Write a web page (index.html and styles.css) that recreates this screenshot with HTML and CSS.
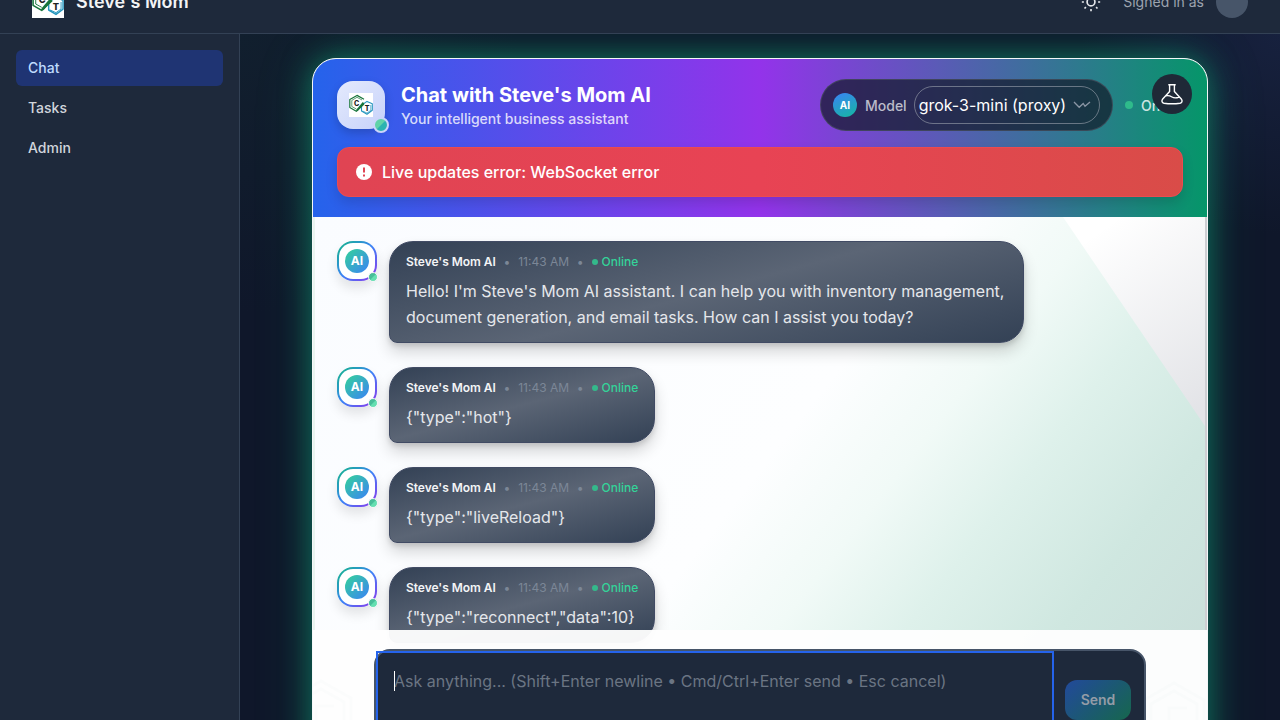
FILE: index.html
```html
<!DOCTYPE html>
<html lang="en">
<head>
<meta charset="utf-8">
<title>Steve's Mom</title>
<link rel="stylesheet" href="styles.css">
</head>
<body>
<svg width="0" height="0" class="defs">
  <symbol id="logo" viewBox="0 0 24 24">
    <rect width="24" height="24" fill="#fff"/>
    <g fill="none" stroke-linejoin="round">
      <path d="M23.3 10.8V17.3L18 21.300 12.5 18V12.200L18 8.4Z" stroke="#2596be" stroke-width="1.1"/>
      <path d="M13.600 18 18 20 21.800 17.200V12" stroke="#2596be" stroke-width=".7"/>
      <path d="M15 6.2 8 2.4.8 6.5V14.5L7.3 18.300 15 11" stroke="#18753c" stroke-width="1.2"/>
      <path d="M13 7 8 4.3 2.8 7.4V13.5L7.3 16" stroke="#18753c" stroke-width=".7"/>
      <path d="M7.800 17.6 14.500 9.7" stroke="#18753c" stroke-width="2"/>
    </g>
    <text x="7.7" y="13" text-anchor="middle" class="logo-letter">C</text>
    <text x="18" y="18" text-anchor="middle" class="logo-letter">T</text>
  </symbol>
  <symbol id="hex" viewBox="0 0 70 80">
    <path d="M35 3 65 20V60L35 77 5 60V20ZM35 11 58 24V56L35 69 12 56V24ZM48 28H30V52H48" fill="none" stroke="currentColor" stroke-width="3"/>
  </symbol>
</svg>
<header class="topbar">
  <div class="brand"><svg class="brand-logo"><use href="#logo"/></svg><span>Steve's Mom</span></div>
  <div class="account">
    <svg class="sun" viewBox="0 0 24 24" fill="none" stroke="currentColor" stroke-width="2" stroke-linecap="butt"><circle cx="12" cy="12" r="4.7"/><path d="M12 1v2.5M12 20.5V23M1 12h2.500M20.500 12H23M4.200 4.200l1.700 1.700M18.100 18.100l1.700 1.700M4.200 19.800l1.700-1.700M18.100 5.900l1.700-1.700"/></svg>
    <span class="signed">Signed in as</span><span class="user"></span>
  </div>
</header>
<div class="shell">
  <nav class="sidebar">
    <a class="nav active">Chat</a><a class="nav">Tasks</a><a class="nav">Admin</a>
  </nav>
  <main class="main">
    <section class="card">
      <div class="hero">
        <div class="hero-row">
          <div class="hero-logo"><svg width="24" height="24"><use href="#logo"/></svg><i class="hero-dot"></i></div>
          <div class="titles"><h1>Chat with Steve's Mom AI</h1><p>Your intelligent business assistant</p></div>
          <div class="model">
            <span class="model-ai">AI</span><span class="model-label">Model</span>
            <span class="select">grok-3-mini (proxy)<svg width="18" height="8" viewBox="0 0 18 8" fill="none" stroke="#8b96a5" stroke-width="1.3"><path d="M1 1 6.200 6.300 10.200 2.500 12 5.300 17 1"/></svg></span>
          </div>
          <div class="status"><i></i><span>Online</span></div>
        </div>
        <div class="alert"><svg width="16" height="16" viewBox="0 0 16 16"><circle cx="8" cy="8" r="8" fill="#fff"/><path d="M8 3.500V8.500M8 10.500V12.500" stroke="#e04454" stroke-width="2"/></svg>Live updates error: WebSocket error</div>
      </div>
      <div class="messages">
        <div class="msg"><div class="avatar"><span>AI</span><i></i></div><div class="bubble"><div class="meta"><b>Steve's Mom AI</b><em>•</em><time>11:43 AM</time><em>•</em><span class="on"><i></i>Online</span></div><p>Hello! I'm Steve's Mom AI assistant. I can help you with inventory management,<br>document generation, and email tasks. How can I assist you today?</p></div></div>
        <div class="msg"><div class="avatar"><span>AI</span><i></i></div><div class="bubble"><div class="meta"><b>Steve's Mom AI</b><em>•</em><time>11:43 AM</time><em>•</em><span class="on"><i></i>Online</span></div><p>{"type":"hot"}</p></div></div>
        <div class="msg"><div class="avatar"><span>AI</span><i></i></div><div class="bubble"><div class="meta"><b>Steve's Mom AI</b><em>•</em><time>11:43 AM</time><em>•</em><span class="on"><i></i>Online</span></div><p>{"type":"liveReload"}</p></div></div>
        <div class="msg"><div class="avatar"><span>AI</span><i></i></div><div class="bubble"><div class="meta"><b>Steve's Mom AI</b><em>•</em><time>11:43 AM</time><em>•</em><span class="on"><i></i>Online</span></div><p>{"type":"reconnect","data":10}</p></div></div>
      </div>
      <div class="footer">
        <svg class="mark mark-left"><use href="#hex"/></svg><svg class="mark mark-right"><use href="#hex"/></svg>
        <div class="composer">
          <div class="input"><i class="caret"></i>Ask anything... (Shift+Enter newline • Cmd/Ctrl+Enter send • Esc cancel)</div>
          <div class="send">Send</div>
        </div>
      </div>
      <div class="lab"><svg width="24" height="24" viewBox="0 0 24 24" fill="none" stroke="#fff" stroke-width="1.4" stroke-linejoin="round"><path d="M8.300 2.800H15.700M9.600 3V9.500L2.700 17C1.200 19 2 20.800 4 21.200Q12 22.300 20 21.200C22 20.800 22.800 19 21.300 17L14.400 9.500V3M6 13.800Q9 13.200 12 15T19 15"/></svg></div>
    </section>
  </main>
</div>
</body>
</html>
```
FILE: styles.css
```css
* { box-sizing: border-box; }
html, body { height: 720px; margin: 0; overflow: hidden; }
body { font-family: Inter, "Liberation Sans", sans-serif; background: #0f172a; color: #e5e7eb; display: flex; flex-direction: column; }
h1, p { margin: 0; }
.defs { position: absolute; }
.logo-letter { font: 800 7px Inter, sans-serif; fill: #222; }
.topbar { height: 64px; flex: none; margin-top: -30px; padding: 1px 32px 0; background: #1e293b; border-bottom: 1px solid #334155; display: flex; align-items: center; justify-content: space-between; }
.brand { display: flex; align-items: center; gap: 12px; font-size: 18px; font-weight: 600; line-height: 28px; color: #f3f4f6; }
.brand-logo { width: 32px; height: 32px; }
.account { display: flex; align-items: center; font-size: 14px; color: #9ca3af; }
.signed { padding-bottom: 2px; }
.sun { width: 20px; height: 20px; margin-right: 22px; color: #e5e7eb; }
.user { width: 32px; height: 32px; margin-left: 12px; border-radius: 50%; background: #475569; }
.shell { flex: 1; min-height: 0; display: flex; }
.sidebar { width: 240px; flex: none; padding: 16px; background: #1e293b; border-right: 1px solid #334155; display: flex; flex-direction: column; gap: 4px; }
.nav { height: 36px; padding: 8px 12px; border-radius: 6px; font-size: 14px; line-height: 20px; font-weight: 500; color: #d1d5db; }
.nav.active { background: #1f3473; color: #bfdbfe; }
.main { flex: 1; min-width: 0; padding: 24px 72px 0; overflow: hidden; background: radial-gradient(circle at 100% 0, #17213e 0, transparent 200px), radial-gradient(circle at 0 0, #111f2e 0, transparent 280px), #0f172a; }
.card { position: relative; height: 760px; border: 1px solid #f4f7f8; border-radius: 24px; background: #fff; box-shadow: 0 0 30px rgba(16,185,129,.5), 0 0 60px rgba(16,185,129,.2); }
.hero { height: 158px; padding: 20px 24px; border-radius: 23px 23px 0 0; background: linear-gradient(90deg, #2563eb, #9333ea 50%, #059669); }
.hero-row { height: 52px; display: flex; align-items: center; }
.hero-logo { position: relative; width: 48px; height: 48px; border-radius: 16px; background: linear-gradient(135deg, #e4eafd, #c7d2fa); display: flex; align-items: center; justify-content: center; box-shadow: 0 4px 10px rgba(0,0,0,.18); }
.hero-dot { position: absolute; right: -4px; bottom: -4px; width: 16px; height: 16px; border: 2px solid #cbd5fa; border-radius: 50%; background: linear-gradient(135deg, #60d3a8 48%, #2bb3b0 52%); }
.titles { margin-left: 16px; flex: 1; white-space: nowrap; }
.titles h1 { font-size: 20px; line-height: 28px; font-weight: 700; color: #fff; }
.titles p { font-size: 14px; line-height: 20px; font-weight: 500; color: rgba(255,255,255,.8); }
.model { height: 52px; width: 293px; flex: none; padding: 0 12px; border: 1px solid rgba(75,85,99,.65); border-radius: 26px; background: rgba(17,24,39,.7); display: flex; align-items: center; }
.model-ai { width: 24px; height: 24px; flex: none; border-radius: 50%; background: linear-gradient(155deg, #3b82f6, #14b8a0); color: #fff; font-size: 10px; font-weight: 700; line-height: 24px; text-align: center; }
.model-label { margin: 0 7px 0 8px; font-size: 14px; font-weight: 500; color: rgba(229,231,235,.78); }
.select { height: 38px; width: 186px; flex: none; padding-left: 4px; border: 1px solid rgba(156,163,175,.6); border-radius: 19px; display: flex; align-items: center; gap: 7px; font-size: 16px; color: #fff; white-space: nowrap; }
.status { width: 58px; margin-left: 12px; display: flex; align-items: center; gap: 8px; flex: none; font-size: 14px; font-weight: 500; color: rgba(255,255,255,.8); }
.status i { width: 8px; height: 8px; border-radius: 50%; background: #2fbb8b; flex: none; }
.alert { height: 50px; margin-top: 16px; padding: 0 18px; border: 1px solid #ec4b50; border-radius: 12px; background: linear-gradient(90deg, #e04453, #e84354 50%, #d94c48); display: flex; align-items: center; gap: 10px; font-size: 16px; font-weight: 500; color: #fff; box-shadow: 0 6px 12px rgba(0,0,0,.13); }
.messages { position: relative; height: 503px; padding: 24px 24px 24px 22px; display: flex; flex-direction: column; gap: 24px; overflow: hidden; border-left: 2px solid #e9f4f0; border-right: 2px solid #cdced2; background: linear-gradient(145deg, transparent 50%, rgba(100,105,125,.18) 72%), #fff; }
.messages::before { content: ""; position: absolute; inset: 0 -2px 0 0; clip-path: polygon(0 0, 748px 0, 892px 212px, 100% 100%, 0 100%); background: linear-gradient(128deg, #fafcff 0%, #fdfeff 50%, #f1faf7 61%, #def1eb 71%, #cfe7e0 83%, #c8dcd8); }
.messages::after { content: ""; position: absolute; right: -2px; top: 212px; width: 2px; height: 291px; background: #98cfbc; }
.msg { position: relative; display: flex; align-items: flex-start; gap: 12px; z-index: 1; flex: none; }
.avatar { position: relative; width: 40px; height: 40px; flex: none; border: 2px solid transparent; border-radius: 16px; background: linear-gradient(#fff, #fff) padding-box, linear-gradient(135deg, #10b981, #3b82f6 50%, #9333ea) border-box; display: flex; align-items: center; justify-content: center; box-shadow: 0 7px 12px rgba(0,0,0,.1); }
.avatar span { width: 24px; height: 24px; border-radius: 50%; background: linear-gradient(135deg, #34d399, #3b82f6); color: #fff; text-align: center; font-size: 12px; line-height: 24px; font-weight: 700; }
.avatar i { position: absolute; right: -3px; bottom: -3px; width: 10px; height: 10px; border: 1px solid #f4f5f8; border-radius: 50%; background: linear-gradient(135deg, #47bd99 49%, #64dfb1 51%); }
.bubble { padding: 12px 16px; border: 1px solid #414b64; border-radius: 24px 24px 24px 8px; background: linear-gradient(165deg, #334155, #5b6575 50%, #334155); box-shadow: 0 9px 15px rgba(0,0,0,.16), 0 3px 5px rgba(0,0,0,.12); }
.bubble:has(br) { width: 635px; }
.meta { height: 16px; margin-bottom: 8px; display: flex; align-items: center; gap: 8px; font-size: 12px; line-height: 16px; font-weight: 500; white-space: nowrap; color: #7c8797; }
.meta b { font-weight: 600; letter-spacing: -.03px; color: #f3f4f6; }
.meta em { font-style: normal; }
.meta time { font-weight: 400; }
.on { display: flex; align-items: center; gap: 4px; color: #34d399; }
.on i { width: 6px; height: 6px; border-radius: 50%; background: #34b98b; }
.bubble p { font-size: 16px; line-height: 26px; white-space: nowrap; color: #e5e7eb; }
.footer { position: relative; z-index: 2; margin-top: -90px; height: 188px; padding: 19px 61px; background: rgba(254,254,254,.96); overflow: hidden; }
.mark { position: absolute; width: 70px; height: 80px; color: rgba(100,130,140,.02); }
.mark-left { left: -27px; top: 48px; }
.mark-right { right: -2px; top: 50px; }
.composer { position: relative; height: 120px; border: 2px solid #475569; border-radius: 16px; background: #1e293b; display: flex; width: 772px; }
.input { width: 678px; height: 100px; flex: none; outline: 2px solid #2563eb; outline-offset: -2px; padding: 18px; font-size: 16px; line-height: 24px; color: #6b7583; white-space: nowrap; }
.caret { position: absolute; left: 18px; top: 20px; width: 1px; height: 20px; background: #fff; }
.send { width: 66px; height: 40px; margin: 29px 0 0 11px; border-radius: 12px; background: linear-gradient(135deg, #22499b, #16674d); font-size: 14px; line-height: 40px; font-weight: 600; text-align: center; color: #949ca7; }
.lab { position: absolute; z-index: 3; left: 839px; top: 15px; width: 40px; height: 40px; border-radius: 50%; background: #1f2937; display: flex; align-items: center; justify-content: center; }
```
